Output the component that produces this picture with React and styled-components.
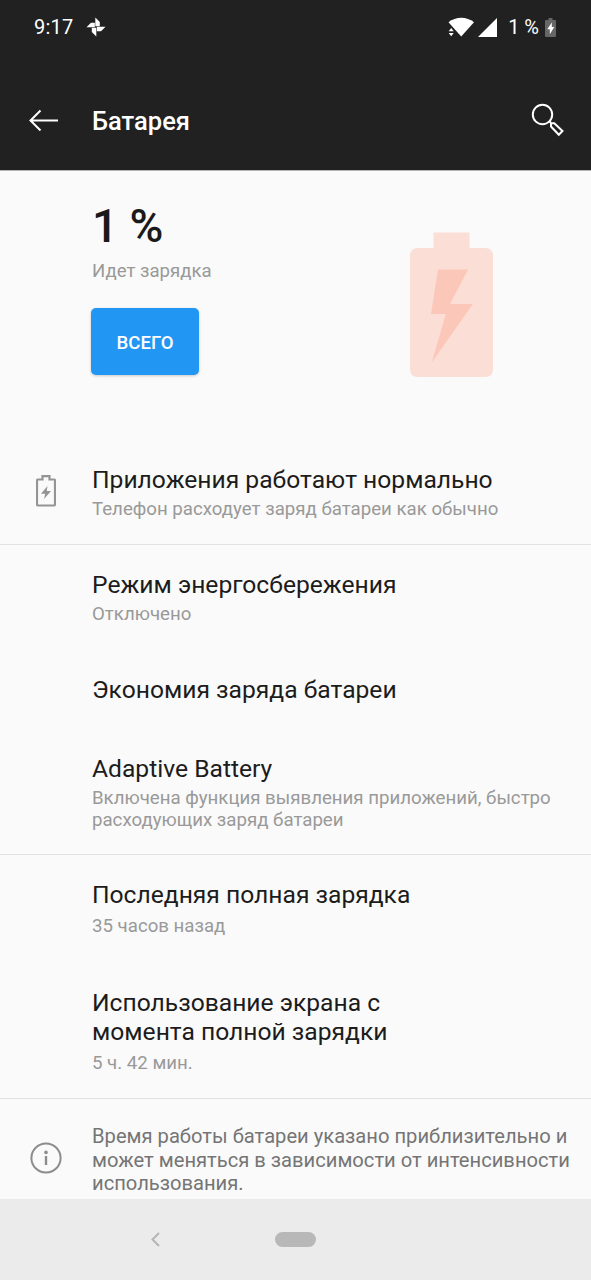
import React from "react";
import styled, { createGlobalStyle } from "styled-components";

const GlobalStyle = createGlobalStyle`
	* {
		box-sizing: border-box;
	}

	body {
		margin: 0;
		background: #fafafa;
		font-family: Roboto, "Noto Sans", sans-serif;
	}
`;

const batteryRows = [
	{
		title: "Приложения работают нормально",
		text: "Телефон расходует заряд батареи как обычно",
		icon: true,
		height: 105,
		divider: true,
	},
	{
		title: "Режим энергосбережения",
		text: "Отключено",
		height: 105,
	},
	{ title: "Экономия заряда батареи", height: 79 },
	{
		title: "Adaptive Battery",
		text: "Включена функция выявления приложений, быстро расходующих заряд батареи",
		height: 126,
		divider: true,
	},
	{
		title: "Последняя полная зарядка",
		text: "35 часов назад",
		height: 108,
		gap: 6,
	},
	{
		title: "Использование экрана с момента полной зарядки",
		text: "5 ч. 42 мин.",
		height: 136,
		gap: 6,
		narrow: true,
		divider: true,
	},
];

const PinwheelIcon = () => (
	<svg width="20" height="20" viewBox="0 0 20 20" fill="#fff">
		<path d="M9.300 9.200V.5L13.800 5v4.200z" />
		<path d="M10.800 9.700h8.700L15 14.200h-4.200z" />
		<path d="M10.300 10.800v8.700L5.800 15v-4.200z" />
		<path d="M8.800 10.300H.5L5 5.800h3.800z" />
	</svg>
);

const WifiIcon = () => (
	<svg width="27" height="20" viewBox="0 0 27 20" fill="#fff">
		<path d="M.5 5.200C7.800-.9 18.700-.9 26 5.200L13.200 19.600z" />
		<path d="M.7 14.200l2.500-3.200 2.500 3.200zM.7 16h5l-2.500 3.200z" />
	</svg>
);

const SignalIcon = () => (
	<svg width="19" height="19" viewBox="0 0 19 19" fill="#fff">
		<path d="M19 0v19H0z" />
	</svg>
);

const StatusBatteryIcon = () => (
	<svg width="11" height="19" viewBox="0 0 11 19">
		<path
			d="M3.500 0h4v2H10q1 0 1 1v15q0 1-1 1H1q-1 0-1-1V3q0-1 1-1h2.500z"
			fill="#666"
		/>
		<path d="M6.800 4.500L2.200 11.200h2.600v5l4.500-7.200H6.800z" fill="#fff" />
	</svg>
);

const BackIcon = () => (
	<svg width="29" height="22" viewBox="0 0 29 22" fill="none" stroke="#fff" strokeWidth="2">
		<path d="M29 11.500H1.500M11.500 1.500L1.500 11.500l10 10" />
	</svg>
);

const SearchIcon = () => (
	<svg width="34" height="34" viewBox="0 0 34 34" fill="none" stroke="#fff" strokeWidth="2">
		<circle cx="11.500" cy="11.500" r="9.700" />
		<path d="M18 18l2.300 2.300M20 23.500v-3.300h3.300l8.200 7.800-3.700 3.700z" />
	</svg>
);

const BigBatteryIcon = () => (
	<svg width="83" height="145" viewBox="0 0 83 145">
		<path
			d="M23.500 .5h36v15.500H75q8 0 8 8V137q0 8-8 8H8q-8 0-8-8V24q0-8 8-8h15.500z"
			fill="#fbded6"
		/>
		<path d="M28 37.500h30L40 72h22.800L21.800 130.500l14-48.500H21z" fill="#fbc7b8" />
	</svg>
);

const SmallBatteryIcon = () => (
	<svg width="20" height="32" viewBox="0 0 20 32">
		<path
			d="M2 4.500h4.500V1.200h7v3.300H18q1 0 1 1V29.500q0 1-1 1H2q-1 0-1-1V5.500q0-1 1-1z"
			fill="none"
			stroke="#949494"
			strokeWidth="2.2"
		/>
		<path d="M11.500 11L5 18.800h4.200L8 24l7-8h-4.300z" fill="#949494" />
	</svg>
);

const InfoIcon = () => (
	<svg width="32" height="32" viewBox="0 0 32 32">
		<circle cx="16" cy="16" r="14.600" fill="none" stroke="#8c8c8c" strokeWidth="2" />
		<circle cx="16" cy="10.400" r="1.800" fill="#8c8c8c" />
		<path d="M16 14v9" stroke="#8c8c8c" strokeWidth="2.400" />
	</svg>
);

const NavBackIcon = () => (
	<svg width="9" height="15" viewBox="0 0 9 15" fill="none" stroke="#b5b5b5" strokeWidth="2">
		<path d="M8 1L1.500 7.500 8 14" />
	</svg>
);

const App = () => {
	return (
		<Screen>
			<GlobalStyle />
			<Header>
				<StatusBar>
					<Clock>9:17</Clock>
					<PinwheelIcon />
					<StatusIcons>
						<WifiIcon />
						<SignalIcon />
						<Percent>1 %</Percent>
						<StatusBatteryIcon />
					</StatusIcons>
				</StatusBar>
				<Toolbar>
					<BackIcon />
					<PageTitle>Батарея</PageTitle>
					<SearchIcon />
				</Toolbar>
			</Header>
			<Content>
				<Summary>
					<div>
						<Level>1 %</Level>
						<Status>Идет зарядка</Status>
						<TotalButton>ВСЕГО</TotalButton>
					</div>
					<BigBatteryIcon />
				</Summary>
				{batteryRows.map((row) => (
					<Row key={row.title} $height={row.height} $divider={row.divider}>
						<IconCell>{row.icon && <SmallBatteryIcon />}</IconCell>
						<div>
							<RowTitle $narrow={row.narrow}>{row.title}</RowTitle>
							{row.text && <RowText $gap={row.gap}>{row.text}</RowText>}
						</div>
					</Row>
				))}
				<Footnote>
					<IconCell>
						<InfoIcon />
					</IconCell>
					<FootnoteText>
						Время работы батареи указано приблизительно и может меняться в
						зависимости от интенсивности использования.
					</FootnoteText>
				</Footnote>
			</Content>
			<NavBar>
				<NavBackIcon />
				<HomePill />
			</NavBar>
		</Screen>
	);
};

export default App;

const Screen = styled.div`
	display: flex;
	flex-direction: column;
	width: 591px;
	height: 1280px;
	overflow: hidden;
	background: #fafafa;
`;

const Header = styled.header`
	flex: none;
	height: 170px;
	background: #212121;
	color: #fff;
`;

const StatusBar = styled.div`
	display: flex;
	align-items: center;
	height: 54px;
	padding: 0 35px 0 34px;
`;

const Clock = styled.span`
	width: 52px;
	font-size: 20px;
	letter-spacing: 0.2px;
`;

const StatusIcons = styled.div`
	display: flex;
	align-items: center;
	margin-left: auto;

	svg + svg {
		margin-left: 3px;
	}
`;

const Percent = styled.span`
	margin: 0 6px 0 11px;
	font-size: 20px;
`;

const Toolbar = styled.div`
	display: flex;
	align-items: center;
	height: 132px;
	padding: 0 26px 0 29px;
`;

const PageTitle = styled.h1`
	flex: 1;
	margin: 0 0 0 34px;
	padding-top: 1px;
	font-size: 25.5px;
	font-weight: 500;
	line-height: 30px;
`;

const Content = styled.main`
	flex: 1;
	min-height: 0;
	overflow: hidden;
	border-top: 1px solid #b4b4b4;
`;

const Summary = styled.section`
	display: flex;
	justify-content: space-between;
	height: 269px;
	padding: 27px 98px 0 92px;

	> svg {
		margin-top: 34px;
	}
`;

const Level = styled.div`
	color: #1a1a1a;
	font-size: 46px;
	font-weight: 500;
	line-height: 56px;
`;

const Status = styled.div`
	margin-top: 6px;
	color: #999;
	font-size: 18.6px;
	line-height: 22px;
`;

const TotalButton = styled.button`
	display: block;
	width: 108px;
	height: 67px;
	margin: 26px 0 0 -1px;
	padding: 2px 0 0;
	border: 0;
	border-radius: 5px;
	background: #2196f3;
	box-shadow: 0 1px 3px rgba(0, 0, 0, 0.2);
	color: #fff;
	font-family: inherit;
	font-size: 18.6px;
	font-weight: 500;
`;

const Row = styled.section`
	display: flex;
	height: ${({ $height }) => $height}px;
	padding-top: 25px;
	border-bottom: ${({ $divider }) => ($divider ? "1px solid #e2e2e2" : "0")};
`;

const IconCell = styled.div`
	display: flex;
	flex: none;
	justify-content: center;
	width: 92px;
	padding-top: 10px;
`;

const RowTitle = styled.h2`
	max-width: ${({ $narrow }) => ($narrow ? "340px" : "none")};
	margin: 0;
	color: #1c1c1c;
	font-size: 24.64px;
	font-weight: 400;
	line-height: 29px;
`;

const RowText = styled.p`
	max-width: 475px;
	margin: ${({ $gap = 4 }) => $gap}px 0 0;
	color: #999;
	font-size: 18.67px;
	line-height: 22px;
`;

const Footnote = styled.section`
	display: flex;
	padding-top: 26px;

	svg {
		margin-top: 7px;
	}
`;

const FootnoteText = styled.p`
	width: 490px;
	margin: 0;
	color: #757575;
	font-size: 20.16px;
	line-height: 23.5px;
`;

const NavBar = styled.nav`
	display: flex;
	flex: none;
	align-items: center;
	height: 81px;
	padding: 0 0 0 151px;
	background: #ebebeb;
`;

const HomePill = styled.div`
	width: 41px;
	height: 15px;
	margin-left: 115px;
	border-radius: 8px;
	background: #b8b8b8;
`;
